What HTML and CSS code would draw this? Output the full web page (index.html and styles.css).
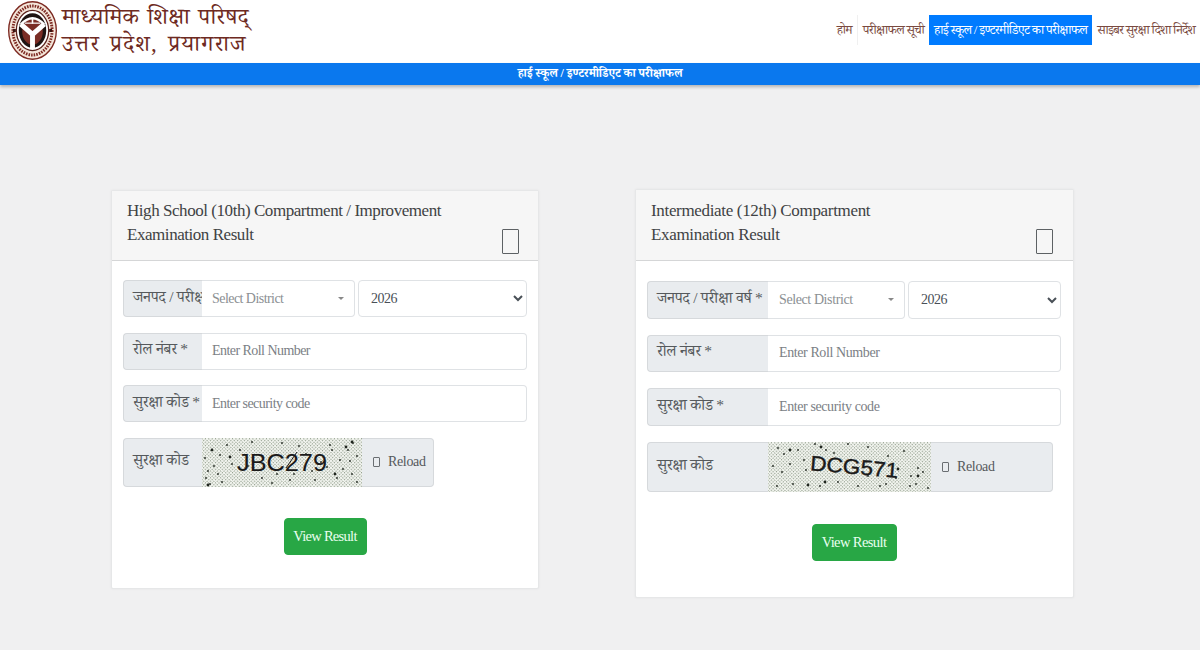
FILE: index.html
```html
<!DOCTYPE html>
<html lang="hi">
<head>
<meta charset="utf-8">
<title>हाई स्कूल / इण्टरमीडिएट का परीक्षाफल</title>
<link rel="stylesheet" href="styles.css">
</head>
<body>
<header class="topbar">
  <div class="brand">
    <svg class="logo" viewBox="0 0 50 60" aria-hidden="true">
      <ellipse cx="25" cy="30" rx="24.300" ry="29.300" fill="#f4e6da" stroke="#7d2a22" stroke-width="1.400"/>
      <ellipse cx="25" cy="30" rx="20" ry="25" fill="none" stroke="#7d2a22" stroke-width="3" stroke-dasharray="1.600 1.100"/>
      <ellipse cx="25" cy="30" rx="16.500" ry="20.500" fill="#fff" stroke="#5a211b" stroke-width="1.300"/>
      <ellipse cx="25" cy="30" rx="14" ry="17.500" fill="#1f1412"/>
      <ellipse cx="25" cy="31" rx="10.500" ry="13.500" fill="#7a2d25"/>
      <path d="M13 24Q25 11 37 24" fill="none" stroke="#fff" stroke-width="2.400"/>
      <path d="M17 22.500h16" stroke="#fff" stroke-width="1.200"/>
      <path d="M25 17v6" stroke="#fff" stroke-width="1.600"/>
      <path d="M13 23.500L25 34L37 23.500M25 34V48" fill="none" stroke="#fff" stroke-width="5"/>
      <path d="M5 30h3M42 30h3" stroke="#3a1512" stroke-width="3"/>
    </svg>
    <div class="brand-text">
      <div>माध्यमिक शिक्षा परिषद्</div>
      <div class="brand-line-two">उत्तर प्रदेश, प्रयागराज</div>
    </div>
  </div>
  <nav class="nav">
    <a class="nav-link nav-home">होम</a>
    <a class="nav-link">परीक्षाफल सूची</a>
    <a class="nav-link active">हाई स्कूल / इण्टरमीडिएट का परीक्षाफल</a>
    <a class="nav-link">साइबर सुरक्षा दिशा निर्देश</a>
  </nav>
</header>
<div class="banner">हाई स्कूल / इण्टरमीडिएट का परीक्षाफल</div>
<main class="content">
  <section class="card card-a">
    <div class="card-head">
      <h2>High School (10th) Compartment / Improvement<br>Examination Result</h2>
      <span class="missing-glyph"></span>
    </div>
    <div class="card-body">
      <div class="field">
        <span class="addon">जनपद / परीक्षा वर्ष *</span>
        <div class="pick"><span>Select District</span><i class="caret"></i></div>
        <select class="year"><option>2026</option></select>
      </div>
      <div class="field">
        <span class="addon">रोल नंबर *</span>
        <input class="control" placeholder="Enter Roll Number">
      </div>
      <div class="field">
        <span class="addon">सुरक्षा कोड *</span>
        <input class="control" placeholder="Enter security code">
      </div>
      <div class="field captcha-row">
        <span class="addon">सुरक्षा कोड</span>
        <svg class="captcha" viewBox="0 0 160 49" preserveAspectRatio="none" aria-label="JBC279">
          <defs>
            <pattern id="dither" width="2.400" height="2.400" patternUnits="userSpaceOnUse" patternTransform="rotate(45)">
              <rect width="2.400" height="2.400" fill="#f4f6f1"/><rect width="1.200" height="1.200" fill="#939f8e"/>
            </pattern>
          </defs>
          <rect width="160" height="49" fill="url(#dither)"/>
          <path class="noise" d="M6 33h0M8 46h0M4 40h0M12 28h0M25 7h0M30 26h0M46 28h0M60 40h0M20 44h0M38 12h0M50 4h0M92 36h0M104 16h0M125 29h0M135 40h0M151 5h0M148 23h0M141 31h0M110 33h0M70 45h0M130 12h0M119 24h0M155 18h0M80 5h0M97 8h0M113 42h0M146 12h0M150 36h0M155 44h0M128 7h0M138 22h0M18 17h0M88 42h0M75 36h0M16 36h0M3 20h0"/>
          <path class="noise big" d="M150 4h0M10 12h0M28 19h0M133 36h0M144 9h0M6 47h0"/>
          <text class="captcha-text" x="35" y="33" textLength="90" lengthAdjust="spacingAndGlyphs">JBC279</text>
          <path class="scratch" d="M95 14L84 30"/>
        </svg>
        <span class="reload"><i class="reload-icon"></i>Reload</span>
      </div>
      <div class="actions"><button class="btn" type="button">View Result</button></div>
    </div>
  </section>

  <section class="card card-b">
    <div class="card-head">
      <h2>Intermediate (12th) Compartment<br>Examination Result</h2>
      <span class="missing-glyph"></span>
    </div>
    <div class="card-body">
      <div class="field">
        <span class="addon">जनपद / परीक्षा वर्ष *</span>
        <div class="pick"><span>Select District</span><i class="caret"></i></div>
        <select class="year"><option>2026</option></select>
      </div>
      <div class="field">
        <span class="addon">रोल नंबर *</span>
        <input class="control" placeholder="Enter Roll Number">
      </div>
      <div class="field">
        <span class="addon">सुरक्षा कोड *</span>
        <input class="control" placeholder="Enter security code">
      </div>
      <div class="field captcha-row">
        <span class="addon">सुरक्षा कोड</span>
        <svg class="captcha" viewBox="0 0 163 50" preserveAspectRatio="none" aria-label="DCG571">
          <rect width="163" height="50" fill="url(#dither)"/>
          <path class="noise" d="M10 6h0M16 12h0M47 2h0M80 2h0M58 8h0M5 24h0M14 30h0M52 44h0M70 40h0M100 34h0M120 14h0M128 36h0M143 34h0M155 30h0M160 46h0M25 42h0M90 44h0M38 28h0M150 26h0M112 44h0M30 8h0M36 18h0M66 11h0M100 5h0M136 9h0M148 42h0M22 22h0M9 44h0M118 42h0M142 44h0"/>
          <path class="noise big" d="M53 5h0M57 40h0M130 27h0M150 34h0M40 43h0M22 8h0"/>
          <text class="captcha-text slanted" x="42" y="32" textLength="88" lengthAdjust="spacingAndGlyphs" transform="rotate(5 86 28)">DCG571</text>
        </svg>
        <span class="reload"><i class="reload-icon"></i>Reload</span>
      </div>
      <div class="actions"><button class="btn" type="button">View Result</button></div>
    </div>
  </section>
</main>
</body>
</html>
```

FILE: styles.css
```css
* { box-sizing: border-box; }
html, body { margin: 0; padding: 0; }
body {
  width: 1200px;
  height: 650px;
  overflow: hidden;
  background: #f0f0f1;
  color: #495057;
  font-family: "Liberation Serif", "Noto Serif Devanagari", "Noto Sans Devanagari", "Noto Sans", serif;
}

.topbar {
  height: 63px;
  background: #fff;
  display: flex;
  justify-content: space-between;
  align-items: flex-start;
}
.brand { display: flex; align-items: flex-start; padding: 1px 0 0 8px; }
.logo { width: 49px; height: 59px; flex: none; }
.brand-text {
  margin: 2px 0 0 5px;
  color: #6e2a22;
  font-size: 23px;
  line-height: 27px;
  letter-spacing: .4px;
  word-spacing: 2px;
  white-space: nowrap;
}
.brand-line-two { letter-spacing: 1.300px; word-spacing: 3px; }
.nav { display: flex; align-items: stretch; height: 30px; margin-top: 15px; }
.nav-link {
  display: flex;
  align-items: center;
  padding: 3px 5px 0;
  color: #7a4a40;
  font-size: 13px;
  letter-spacing: -.75px;
  white-space: nowrap;
}
.nav-home { border-right: 1px solid #f0f0f0; }
.nav-link.active { background: #007bff; color: #fff; }

.banner {
  height: 22px;
  background: #0a78ee;
  color: #fff;
  font-size: 12px;
  font-weight: bold;
  letter-spacing: -.1px;
  line-height: 20px;
  text-align: center;
  box-shadow: 0 2px 3px rgba(0, 0, 0, .25);
}

.content { display: flex; align-items: flex-start; padding-left: 111px; }
.card {
  background: #fff;
  border: 1px solid #e6e7e8;
  border-radius: 2px;
  box-shadow: 0 0 3px rgba(0, 0, 0, .05);
}
.card-a { width: 428px; height: 399px; margin-top: 105px; }
.card-b { width: 439px; height: 409px; margin: 104px 0 0 96px; }

.card-head {
  display: flex;
  justify-content: space-between;
  align-items: flex-end;
  height: 70px;
  padding: 8px 19px 6px 15px;
  background: #f6f6f6;
  border-bottom: 1px solid #d5d6d7;
}
.card-b .card-head { height: 71px; padding: 9px 20px 6px 15px; }
.card-head h2 {
  margin: 0;
  align-self: flex-start;
  color: #3f4244;
  font-size: 17px;
  font-weight: normal;
  letter-spacing: -.45px;
  line-height: 24px;
}
.card-b .card-head h2 { letter-spacing: -.33px; }
.missing-glyph {
  width: 17px;
  height: 25px;
  border: 1.500px solid #5d6164;
  border-radius: 1px;
}

.card-body { padding: 19px 11px 0; }
.card-b .card-body { padding: 20px 12px 0 11px; }
.field {
  display: flex;
  height: 37px;
  margin-bottom: 15.500px;
}
.card-b .field { height: 37.500px; margin-bottom: 16px; }
.addon {
  flex: none;
  width: 79px;
  display: flex;
  align-items: center;
  padding: 2px 0 0 9px;
  overflow: hidden;
  white-space: nowrap;
  background: #e9ecef;
  border: 1px solid #d6d9dc;
  border-right: 0;
  border-radius: 4px 0 0 4px;
  color: #55595c;
  font-size: 15.500px;
  letter-spacing: -.25px;
}
.card-b .addon { width: 121px; }
.pick, .control, .year {
  height: 100%;
  background: #fff;
  border: 1px solid #dfe2e5;
  font-family: inherit;
  font-size: 14px;
  letter-spacing: -.55px;
}
.pick {
  flex: none;
  width: 153px;
  display: flex;
  align-items: center;
  justify-content: space-between;
  padding: 0 10px;
  color: #8b8f93;
  border-left: 0;
  border-radius: 0 4px 4px 0;
}
.card-b .pick { width: 137px; padding-left: 11px; letter-spacing: -.4px; }
.caret {
  width: 0;
  height: 0;
  border: 3.500px solid transparent;
  border-top-color: #888;
  border-bottom: 0;
}
.year {
  flex: 1;
  min-width: 0;
  margin-left: 3px;
  padding: 0 8px;
  border-radius: 4px;
  color: #495057;
  letter-spacing: -.5px;
}
.control {
  flex: 1;
  min-width: 0;
  padding: 0 10px;
  border-left: 0;
  border-radius: 0 4px 4px 0;
  color: #495057;
  outline: none;
}
.card-b .control { padding-left: 11px; letter-spacing: -.4px; }
.control::placeholder { color: #7b8085; opacity: 1; }

.captcha-row, .card-b .captcha-row { height: 49px; margin-bottom: 0; }
.card-b .captcha-row { height: 50px; }
.captcha { flex: none; display: block; width: 160px; height: 100%; }
.card-b .captcha { width: 163px; }
.noise { fill: none; stroke: #20261f; stroke-width: 1.800px; stroke-linecap: round; }
.noise.big { stroke-width: 2.800px; }
.scratch { fill: none; stroke: #1a1a1a; stroke-width: 1px; }
.captcha-text {
  font-family: "Liberation Sans", sans-serif;
  font-size: 24px;
  fill: #1a1a1a;
  stroke: #1a1a1a;
  stroke-width: .1px;
}
.slanted { font-size: 21px; stroke-width: .4px; }
.reload {
  flex: none;
  width: 72px;
  display: flex;
  align-items: center;
  gap: 8px;
  padding-left: 11px;
  background: #e9ecef;
  border: 1px solid #d6d9dc;
  border-left: 0;
  border-radius: 0 4px 4px 0;
  color: #55595c;
  font-size: 14px;
  letter-spacing: -.35px;
}
.card-b .reload { width: 122px; }
.reload-icon {
  width: 7px;
  height: 10px;
  border: 1px solid #6a6e72;
  border-radius: 1px;
}

.actions { display: flex; justify-content: center; padding-top: 31px; }
.btn {
  width: 83px;
  height: 37px;
  padding: 0;
  background: #28a745;
  border: 1px solid #28a745;
  border-radius: 4px;
  color: #eafff0;
  font-family: inherit;
  font-size: 14.500px;
  letter-spacing: -.7px;
}
.card-b .actions { padding-top: 32px; }
.card-b .btn { width: 85px; letter-spacing: -.6px; }
```
